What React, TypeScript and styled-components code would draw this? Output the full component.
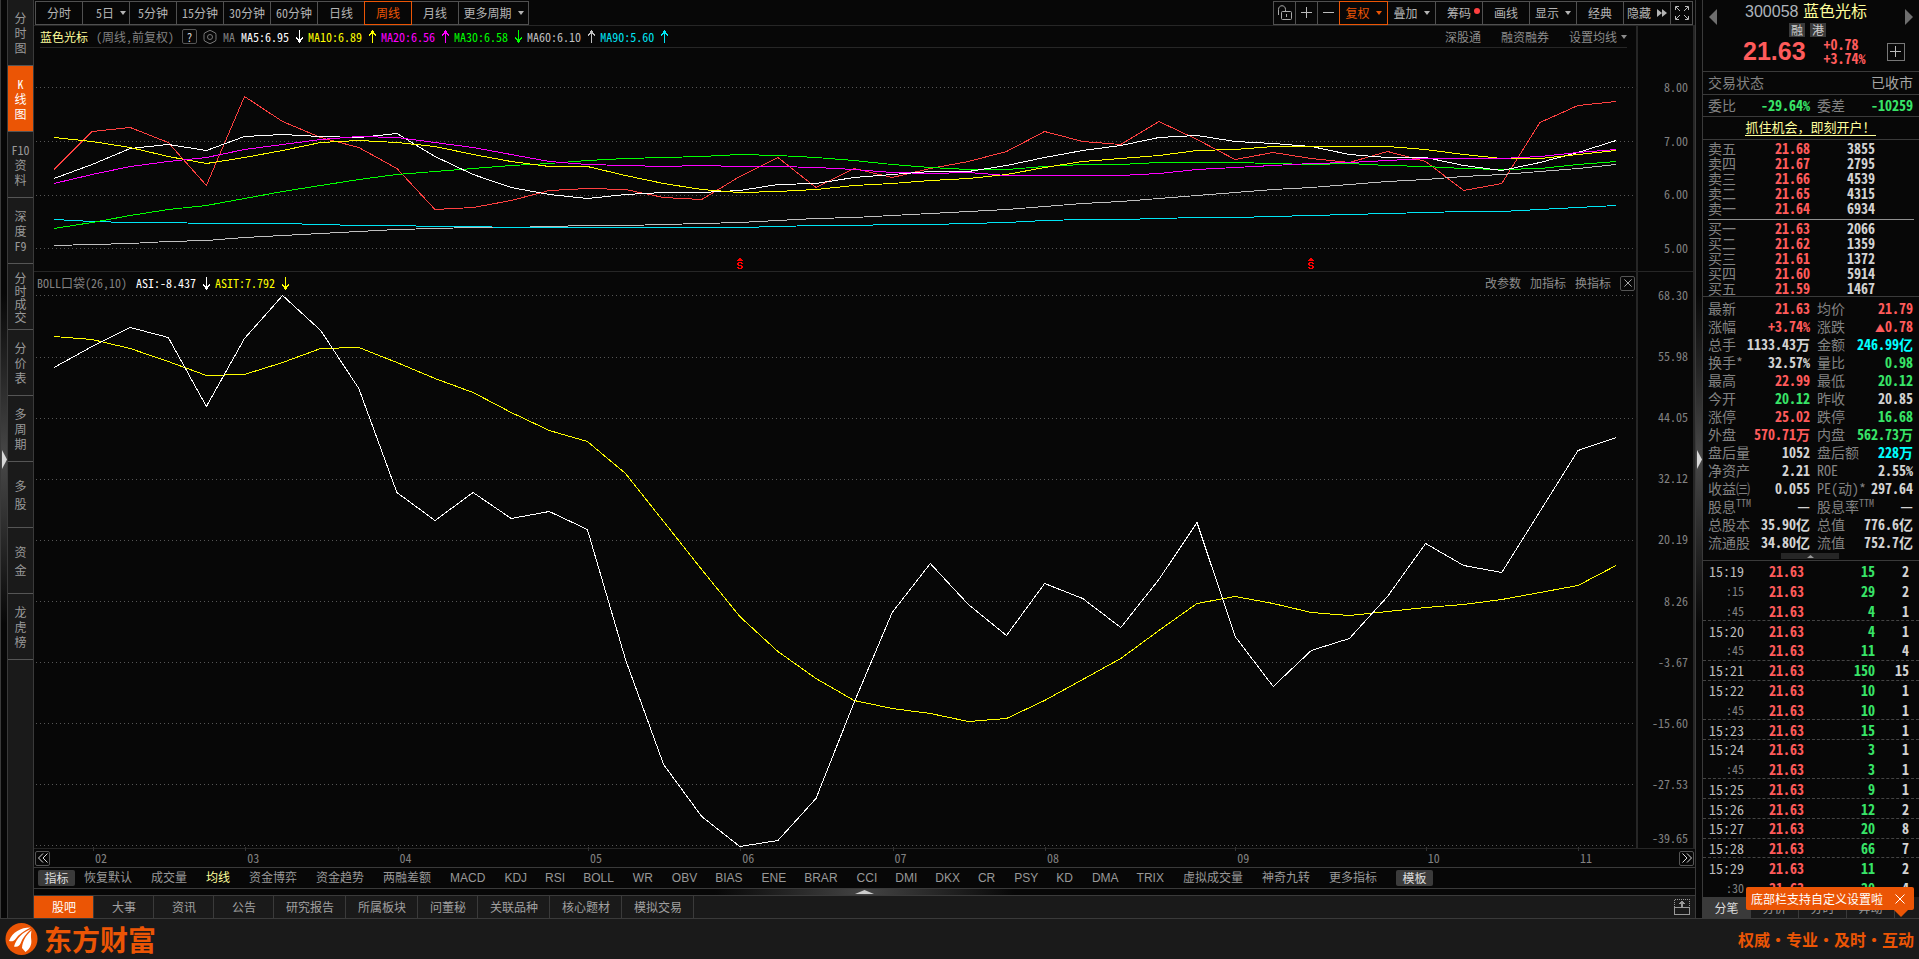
import React from "react";
import styled, { createGlobalStyle, css } from "styled-components";

const c = {
  bg: "#070707",
  panel: "#1a1a1a",
  line: "#3a3a3a",
  faint: "#262626",
  orange: "#eb5505",
  label: "#828282",
  text: "#a6a6a6",
  bright: "#d2d2d2",
  pale: "#ffff9c",
  red: "#ff5b5b",
  green: "#38e468",
  cyan: "#00ffff",
};

const mono = `"Noto Sans Mono CJK SC", "Noto Sans CJK SC", monospace`;
const sans = `"Liberation Sans", "Noto Sans CJK SC", sans-serif`;

const GlobalStyle = createGlobalStyle`
  * { box-sizing: border-box; }
  body { margin: 0; background: ${c.bg}; color: ${c.text}; font: 12px/14px ${mono}; }
  button { font: inherit; color: inherit; background: none; border: 0; padding: 0; margin: 0; white-space: nowrap; cursor: pointer; }
  a { color: inherit; text-decoration: none; }
  svg { display: block; }
`;

const Screen = styled.div`
  display: flex;
  flex-direction: column;
  height: 100vh;
  min-height: 800px;
  min-width: 1500px;
  overflow: hidden;
`;

const Workspace = styled.div`
  flex: 1;
  min-height: 0;
  display: flex;
`;

const Splitter = styled.div`
  flex: none;
  width: 8px;
  display: flex;
  align-items: center;
  justify-content: center;
  border: solid ${c.line};
  border-width: 0 1px;
  background: linear-gradient(${c.bg} 32%, #484848 50%, ${c.bg} 68%);
`;

const SideNav = styled.nav`
  flex: none;
  width: 26px;
  background: ${c.panel};
  border-right: 1px solid ${c.line};
`;

const SideTab = styled.button<{ $active?: boolean; $pitch: number }>`
  display: flex;
  flex-direction: column;
  align-items: center;
  justify-content: center;
  width: 100%;
  height: 66px;
  line-height: ${(p) => p.$pitch}px;
  color: ${(p) => (p.$active ? "#fff" : "#999")};
  background: ${(p) => (p.$active ? c.orange : "transparent")};
  border-bottom: 1px solid #555;
`;

const Center = styled.main`
  flex: 1;
  min-width: 0;
  display: flex;
  flex-direction: column;
`;

const Toolbar = styled.div`
  flex: none;
  height: 26px;
  padding: 1px 2px 0 1px;
  display: flex;
  justify-content: space-between;
  align-items: flex-start;
  border-bottom: 1px solid ${c.faint};
`;

const ButtonGroup = styled.div`
  display: flex;
  padding-left: 1px;
`;

const ToolButton = styled.button<{ $w: number; $active?: boolean; $indent?: boolean }>`
  position: relative;
  display: flex;
  align-items: center;
  justify-content: center;
  gap: 6px;
  width: ${(p) => p.$w}px;
  height: 24px;
  margin-left: -1px;
  padding-left: ${(p) => (p.$indent ? 10 : 0)}px;
  border: 1px solid ${(p) => (p.$active ? c.orange : "#505050")};
  color: ${(p) => (p.$active ? c.orange : "#b4b4b4")};
  z-index: ${(p) => (p.$active ? 1 : 0)};
`;

const RedDot = styled.i`
  position: absolute;
  top: 6px;
  right: 2px;
  width: 6px;
  height: 6px;
  border-radius: 50%;
  background: #ff4040;
`;

const Panel = styled.section<{ $fixed?: boolean }>`
  display: flex;
  min-height: 0;
  ${(p) =>
    p.$fixed
      ? css`
          flex: none;
          height: 246px;
          border-bottom: 1px solid ${c.faint};
        `
      : css`
          flex: 1;
        `}
`;

const PlotColumn = styled.div`
  flex: 1;
  min-width: 0;
  display: flex;
  flex-direction: column;
`;

const Axis = styled.div<{ $top: number; $bottom: number }>`
  flex: none;
  width: 59px;
  padding: ${(p) => p.$top}px 5px ${(p) => p.$bottom}px 0;
  display: flex;
  flex-direction: column;
  align-items: flex-end;
  justify-content: space-between;
  color: ${c.label};
  border: solid ${c.faint};
  border-width: 0 2px;
`;

const AxisSlot = styled.span<{ $last?: boolean }>`
  flex: ${(p) => (p.$last ? "none" : "1")};
  margin-top: ${(p) => (p.$last ? "-7px" : "0")};
`;

const ChartHeader = styled.header<{ $ruled?: boolean }>`
  flex: none;
  display: flex;
  align-items: center;
  justify-content: space-between;
  ${(p) =>
    p.$ruled
      ? css`
          height: 22px;
          margin: 0 9px 0 6px;
          border-bottom: 1px solid ${c.faint};
        `
      : css`
          height: 18px;
          padding: 4px 1px 0 3px;
        `}
`;

const Inline = styled.div<{ $gap?: number }>`
  display: flex;
  align-items: center;
  gap: ${(p) => p.$gap ?? 0}px;
  white-space: pre;
`;

const Reading = styled.span<{ $color: string }>`
  display: flex;
  align-items: center;
  color: ${(p) => p.$color};
  svg {
    width: 19px;
  }
`;

const Muted = styled.span`
  color: ${c.label};
`;

const StockName = styled.span`
  color: ${c.pale};
`;

const BoxButton = styled.button`
  display: flex;
  align-items: center;
  justify-content: center;
  width: 15px;
  height: 15px;
  border: 1px solid #555;
  border-radius: 2px;
  color: ${c.bright};
`;

const TextButton = styled.button`
  display: flex;
  align-items: center;
  gap: 4px;
  color: #8c8c8c;
`;

const Plot = styled.svg`
  flex: 1;
  min-height: 0;
  width: 100%;
  fill: none;
  shape-rendering: crispEdges;
  line {
    stroke: #565656;
    stroke-dasharray: 1 3;
  }
  polyline {
    vector-effect: non-scaling-stroke;
  }
`;

const DateRow = styled.div`
  flex: none;
  height: 19px;
  display: flex;
  border-top: 1px solid ${c.faint};
`;

const MonthTrack = styled.div`
  flex: 1;
  display: flex;
`;

const Month = styled.span<{ $span: number }>`
  flex: ${(p) => p.$span} 1 0;
  position: relative;
  padding-top: 2px;
  text-indent: 2px;
  color: ${c.label};
  &::before {
    content: "";
    position: absolute;
    left: 0;
    top: -2px;
    height: 4px;
    border-left: 1px solid #333;
  }
`;

const PageEdge = styled.div<{ $end?: boolean }>`
  display: flex;
  align-items: center;
  ${(p) =>
    p.$end
      ? css`
          width: 59px;
          justify-content: flex-end;
          padding-right: 1px;
        `
      : css`
          flex: 152 1 0;
          padding-left: 1px;
        `}
`;

const IndicatorRow = styled.div`
  flex: none;
  height: 22px;
  padding-left: 4px;
  display: flex;
  align-items: center;
  border: solid ${c.line};
  border-width: 1px 0;
`;

const IndicatorButton = styled.button<{ $on?: boolean; $tight?: boolean }>`
  margin-right: ${(p) => (p.$tight ? 18 : 19)}px;
  font-family: ${sans};
  color: ${(p) => (p.$on ? c.pale : "#999")};
`;

const Chip = styled.button<{ $lead?: boolean }>`
  width: 37px;
  height: 16px;
  margin-right: ${(p) => (p.$lead ? "9px" : "0")};
  border-radius: 2px;
  background: #3b3b3b;
  color: #ddd;
`;

const DragBar = styled.div`
  flex: none;
  height: 6px;
  display: flex;
  align-items: center;
  justify-content: center;
  background: linear-gradient(90deg, ${c.bg} 41%, #444 50%, ${c.bg} 59%);
`;

const BottomTabs = styled.div`
  flex: none;
  height: 23px;
  display: flex;
  justify-content: space-between;
  background: ${c.panel};
  border-top: 1px solid ${c.line};
`;

const BottomTab = styled.button<{ $active?: boolean }>`
  min-width: 60px;
  height: 22px;
  padding: 0 11px 0 12px;
  border-right: 1px solid ${c.line};
  color: ${(p) => (p.$active ? "#fff" : "#a0a0a0")};
  background: ${(p) => (p.$active ? c.orange : "transparent")};
`;

const PopOut = styled.button`
  padding-right: 5px;
`;

const Quote = styled.aside`
  position: relative;
  flex: none;
  width: 216px;
  display: flex;
  flex-direction: column;
  font-size: 14px;
  line-height: 18px;
`;

const QuoteHeader = styled.header`
  flex: none;
  height: 71px;
  display: flex;
`;

const HeaderSide = styled.div<{ $w: number }>`
  width: ${(p) => p.$w}px;
  padding: 9px 6px;
  display: flex;
  flex-direction: column;
  align-items: ${(p) => (p.$w > 24 ? "flex-end" : "flex-start")};
  gap: 18px;
`;

const HeaderBody = styled.div`
  flex: 1;
`;

const Title = styled.h1`
  margin: 0;
  height: 22px;
  font: 16px/24px ${sans};
  text-align: center;
  color: #aeb4bc;
  white-space: pre;
`;

const Badges = styled.div`
  display: flex;
  justify-content: center;
  gap: 5px;
  margin: 1px 0 0 3px;
`;

const Badge = styled.span`
  width: 16px;
  height: 14px;
  font-size: 12px;
  line-height: 14px;
  text-align: center;
  background: #3a3a3a;
  color: #ccc;
`;

const PriceLine = styled.div`
  display: flex;
  align-items: center;
  gap: 18px;
  height: 28px;
  margin-left: 18px;
  font-weight: 700;
  line-height: 14px;
  color: ${c.red};
`;

const BigPrice = styled.strong`
  font: 700 25px/28px ${sans};
`;

const PlusButton = styled.button`
  display: flex;
  align-items: center;
  justify-content: center;
  width: 18px;
  height: 18px;
  margin-right: 8px;
  border: 1px solid #777;
`;

const StatusRow = styled.div<{ $center?: boolean }>`
  flex: none;
  height: 23px;
  padding: 0 6px 2px 5px;
  display: flex;
  align-items: center;
  justify-content: ${(p) => (p.$center ? "center" : "space-between")};
  border-top: 1px solid ${c.line};
`;

const PromoLink = styled.a`
  font-size: 13px;
  line-height: 16px;
  color: ${c.pale};
  border-bottom: 1px solid ${c.pale};
`;

const Pair = styled.div`
  flex: none;
  display: grid;
  grid-template-columns: 102fr 96fr;
  column-gap: 7px;
  padding: 0 6px 0 5px;
  width: 100%;
`;

const Cell = styled.div`
  display: flex;
  height: 18px;
  justify-content: space-between;
  color: ${c.label};
  white-space: nowrap;
  sup {
    font-size: 10px;
    line-height: 10px;
    vertical-align: 5px;
  }
`;

const Value = styled.span<{ $tone: Tone }>`
  font-weight: 700;
  color: ${(p) => tones[p.$tone]};
`;

const RiseMark = styled.small`
  font-size: 10px;
  line-height: 10px;
`;

const PairRow = styled.div`
  flex: none;
  height: 22px;
  padding-bottom: 2px;
  display: flex;
  align-items: center;
  border-top: 1px solid ${c.line};
`;

const Book = styled.table`
  display: block;
  flex: none;
  border-top: 1px solid ${c.line};
  padding: 1px 5px 0;
  tbody {
    display: block;
  }
  tbody + tbody {
    border-top: 1px solid #909090;
    margin-top: 3px;
    padding-top: 1px;
  }
  tr {
    display: grid;
    grid-template-columns: 36px 66px 65px;
    line-height: 15px;
    height: 15px;
  }
  th,
  td {
    padding: 0;
    text-align: right;
    font-weight: 700;
    color: ${c.bright};
  }
  th {
    text-align: left;
    font-weight: 400;
    color: ${c.label};
  }
  td:nth-child(2) {
    color: ${c.red};
  }
`;

const Stats = styled.div`
  flex: none;
  border-top: 1px solid ${c.line};
  padding-top: 2px;
`;

const Collapse = styled.button`
  display: flex;
  align-items: center;
  justify-content: center;
  width: 58px;
  height: 6px;
  margin: 2px 0 1px 78px;
  background: #262626;
`;

const Trades = styled.table`
  flex: 1;
  min-height: 0;
  display: flex;
  border-top: 1px solid ${c.line};
  tbody {
    flex: 1;
    min-height: 0;
    display: flex;
    flex-direction: column;
  }
`;

const TradeRow = styled.tr<{ $minute: boolean; $rule: boolean }>`
  flex: 1 1 0;
  min-height: 0;
  display: grid;
  grid-template-columns: 36px 60px 71px 34px;
  align-items: center;
  padding-left: 5px;
  border-top: 1px dashed ${(p) => (p.$rule ? "#444" : "transparent")};
  td {
    padding: 0;
    text-align: right;
    font-weight: 700;
    line-height: 16px;
    color: ${c.bright};
  }
  td:nth-child(1) {
    font-size: ${(p) => (p.$minute ? 14 : 12)}px;
    font-weight: ${(p) => (p.$minute ? 500 : 400)};
    color: ${(p) => (p.$minute ? "#bdbdbd" : c.label)};
  }
  td:nth-child(2) {
    color: ${c.red};
  }
  td:nth-child(3) {
    color: ${c.green};
  }
`;

const QuoteTabs = styled.div`
  flex: none;
  height: 21px;
  display: flex;
  background: ${c.panel};
  font-size: 12px;
  line-height: 21px;
`;

const QuoteTab = styled.button<{ $active?: boolean }>`
  width: 48px;
  border-right: 1px solid ${c.line};
  color: ${(p) => (p.$active ? "#ddd" : "#999")};
  background: ${(p) => (p.$active ? "#3a3a3a" : "transparent")};
`;

const Tip = styled.div`
  position: absolute;
  right: 5px;
  bottom: 8px;
  width: 168px;
  height: 23px;
  padding: 0 9px 0 5px;
  display: flex;
  align-items: center;
  justify-content: space-between;
  font-size: 12px;
  color: #fff;
  background: ${c.orange};
  border-radius: 2px;
  &::after {
    content: "";
    position: absolute;
    right: 5px;
    top: 22px;
    border: solid transparent;
    border-width: 8px 8px 0;
    border-top-color: ${c.orange};
  }
`;

const Footer = styled.footer`
  flex: none;
  height: 41px;
  padding: 0 5px;
  display: flex;
  align-items: center;
  justify-content: space-between;
  background: ${c.panel};
  border-top: 1px solid ${c.line};
  color: ${c.orange};
  font-family: "Noto Sans CJK SC", sans-serif;
  font-weight: 700;
`;

const Brand = styled.a`
  display: flex;
  align-items: center;
  gap: 6px;
  font-size: 28px;
  line-height: 32px;
`;

const Slogan = styled.span`
  font-size: 16px;
  line-height: 20px;
`;

type Tone = "red" | "green" | "cyan" | "plain";
const tones: Record<Tone, string> = { red: c.red, green: c.green, cyan: c.cyan, plain: c.bright };

/* ---------- data ---------- */

const sideTabs = [
  ["分", "时", "图"],
  ["K", "线", "图"],
  ["F10", "资", "料"],
  ["深", "度", "F9"],
  ["分", "时", "成", "交"],
  ["分", "价", "表"],
  ["多", "周", "期"],
  ["多", "股"],
  ["资", "金"],
  ["龙", "虎", "榜"],
];
const pitches: Record<number, number> = { 2: 18, 3: 15, 4: 13 };

const periods = [
  { t: "分时" },
  { t: "5日", menu: true },
  { t: "5分钟" },
  { t: "15分钟" },
  { t: "30分钟" },
  { t: "60分钟" },
  { t: "日线" },
  { t: "周线", active: true },
  { t: "月线" },
];

const months: [string, number][] = [
  ["02", 400], ["03", 400], ["04", 500], ["05", 400], ["06", 400],
  ["07", 400], ["08", 500], ["09", 500], ["10", 400], ["11", 152],
];

const averages: [string, string, boolean][] = [
  ["MA5:6.95", "#ffffff", false],
  ["MA10:6.89", "#ffff00", true],
  ["MA20:6.56", "#ff00ff", true],
  ["MA30:6.58", "#00ff00", false],
  ["MA60:6.10", "#c0c0c0", true],
  ["MA90:5.60", "#00e5f5", true],
];

const priceLines: [string, number[]][] = [
  ["#ff4040", [169, 131, 127, 142, 185, 96, 121, 137, 147, 168, 209, 207, 200, 190, 188, 189, 197, 199, 176, 157, 187, 168, 177, 168, 161, 151, 131, 141, 144, 121, 139, 159, 152, 158, 162, 151, 161, 190, 183, 122, 105, 101]],
  ["#c0c0c0", [245, 244, 243, 241, 240, 237, 235, 233, 231, 229, 228, 227, 227, 226, 225, 225, 224, 223, 222, 220, 218, 217, 215, 213, 211, 209, 206, 203, 201, 198, 195, 192, 189, 187, 184, 181, 179, 176, 174, 171, 168, 164]],
  ["#00e5f5", [219, 221, 222, 222, 223, 223, 223, 224, 225, 225, 226, 226, 227, 227, 227, 227, 227, 227, 227, 226, 225, 225, 224, 224, 223, 222, 220, 219, 219, 218, 217, 217, 216, 215, 214, 213, 212, 211, 211, 209, 207, 205]],
  ["#00ff00", [228, 222, 215, 209, 205, 198, 191, 185, 179, 174, 171, 168, 165, 163, 160, 158, 157, 156, 154, 155, 157, 160, 164, 167, 169, 169, 166, 164, 164, 162, 162, 162, 163, 164, 163, 165, 166, 168, 169, 168, 164, 161]],
  ["#ffffff", [178, 164, 148, 144, 150, 136, 134, 136, 137, 133, 156, 174, 187, 194, 198, 194, 192, 192, 190, 184, 183, 177, 174, 171, 171, 165, 157, 150, 145, 137, 135, 141, 143, 146, 154, 157, 157, 165, 170, 162, 152, 140]],
  ["#ffff00", [137, 141, 147, 156, 163, 157, 150, 142, 140, 142, 146, 154, 161, 166, 166, 175, 183, 189, 192, 191, 189, 185, 183, 180, 178, 174, 167, 161, 158, 155, 150, 149, 146, 146, 146, 146, 149, 154, 158, 158, 154, 150]],
  ["#ff00ff", [183, 174, 166, 161, 157, 149, 144, 139, 136, 137, 142, 147, 154, 161, 164, 165, 166, 165, 166, 166, 167, 169, 172, 173, 172, 175, 175, 175, 175, 173, 169, 167, 165, 163, 162, 160, 158, 158, 158, 156, 152, 149]],
];

const asiLines: [string, number[]][] = [
  ["#ffff00", [336, 339, 348, 361, 375, 374, 362, 348, 347, 362, 378, 392, 412, 430, 441, 473, 521, 569, 616, 651, 678, 700, 708, 713, 721, 718, 700, 679, 658, 630, 603, 596, 603, 612, 615, 611, 607, 604, 599, 592, 585, 565]],
  ["#ffffff", [367, 346, 327, 337, 406, 338, 295, 330, 388, 492, 520, 492, 518, 511, 529, 659, 764, 816, 846, 840, 798, 702, 612, 563, 604, 635, 583, 598, 627, 579, 522, 636, 686, 650, 638, 596, 543, 565, 572, 511, 450, 437]],
];

const indicators = ["恢复默认", "成交量", "均线", "资金博弈", "资金趋势", "两融差额", "MACD", "KDJ", "RSI", "BOLL", "WR", "OBV", "BIAS", "ENE", "BRAR", "CCI", "DMI", "DKX", "CR", "PSY", "KD", "DMA", "TRIX", "虚拟成交量", "神奇九转", "更多指标"];
const isShortCode = (t: string) => /^[A-Z]{3}$/.test(t);
const bottomTabs = ["股吧", "大事", "资讯", "公告", "研究报告", "所属板块", "问董秘", "关联品种", "核心题材", "模拟交易"];

const asks = [["卖五", "21.68", "3855"], ["卖四", "21.67", "2795"], ["卖三", "21.66", "4539"], ["卖二", "21.65", "4315"], ["卖一", "21.64", "6934"]];
const bids = [["买一", "21.63", "2066"], ["买二", "21.62", "1359"], ["买三", "21.61", "1372"], ["买四", "21.60", "5914"], ["买五", "21.59", "1467"]];

type Stat = [React.ReactNode, React.ReactNode, Tone];
const stats: [Stat, Stat][] = [
  [["最新", "21.63", "red"], ["均价", "21.79", "red"]],
  [["涨幅", "+3.74%", "red"], ["涨跌", <><RiseMark>▲</RiseMark>0.78</>, "red"]],
  [["总手", "1133.43万", "plain"], ["金额", "246.99亿", "cyan"]],
  [["换手*", "32.57%", "plain"], ["量比", "0.98", "green"]],
  [["最高", "22.99", "red"], ["最低", "20.12", "green"]],
  [["今开", "20.12", "green"], ["昨收", "20.85", "plain"]],
  [["涨停", "25.02", "red"], ["跌停", "16.68", "green"]],
  [["外盘", "570.71万", "red"], ["内盘", "562.73万", "green"]],
  [["盘后量", "1052", "plain"], ["盘后额", "228万", "cyan"]],
  [["净资产", "2.21", "plain"], ["ROE", "2.55%", "plain"]],
  [["收益㈢", "0.055", "plain"], ["PE(动)*", "297.64", "plain"]],
  [[<>股息<sup>TTM</sup></>, "—", "plain"], [<>股息率<sup>TTM</sup></>, "—", "plain"]],
  [["总股本", "35.90亿", "plain"], ["总值", "776.6亿", "plain"]],
  [["流通股", "34.80亿", "plain"], ["流值", "752.7亿", "plain"]],
];

const trades = [
  ["15:19", "15", "2"], [":15", "29", "2"], [":45", "4", "1"], ["15:20", "4", "1"], [":45", "11", "4"],
  ["15:21", "150", "15"], ["15:22", "10", "1"], [":45", "10", "1"], ["15:23", "15", "1"], ["15:24", "3", "1"],
  [":45", "3", "1"], ["15:25", "9", "1"], ["15:26", "12", "2"], ["15:27", "20", "8"], ["15:28", "66", "7"],
  ["15:29", "11", "2"], [":30", "20", "4"],
];

/* ---------- drawings ---------- */

const Caret = () => (
  <svg width="6" height="4" viewBox="0 0 6 4" fill="currentColor"><path d="M0 0h6L3 4z" /></svg>
);

const Trend = ({ up }: { up: boolean }) => (
  <svg width="19" height="13" viewBox="0 0 19 13" fill="none" stroke="currentColor" shapeRendering="crispEdges">
    <path d={up ? "M10.500 0v13M7.500 4v2M8.500 3v2M9.500 1v3M11.500 1v3M12.500 3v2M13.500 4v2" : "M10.500 0v13M7.500 7v2M8.500 8v2M9.500 9v3M11.500 9v3M12.500 8v2M13.500 7v2"} />
  </svg>
);

const Wedge = () => (
  <svg width="5" height="19" viewBox="0 0 5 19" fill="#d8d8d8"><path d="M0 0l5 9.500-5 9.500z" /></svg>
);

const Side = ({ right }: { right?: boolean }) => (
  <svg width="8" height="16" viewBox="0 0 8 16" fill="#6e6e6e"><path d={right ? "M0 0l8 8-8 8z" : "M8 0L0 8l8 8z"} /></svg>
);

const Chevrons = ({ right }: { right?: boolean }) => (
  <svg width="10" height="10" viewBox="0 0 10 10" fill="none" stroke="#ddd">
    <path d={right ? "M.5.5L5 5 .5 9.500M5 .5L9.500 5 5 9.500" : "M5 .5L.5 5 5 9.500M9.500.5L5 5l4.500 4.500"} />
  </svg>
);

const Lock = () => (
  <svg width="14" height="16" viewBox="0 0 14 16" fill="none" stroke="#aaa">
    <rect x="3.500" y="6.500" width="10" height="8" rx="1" />
    <path d="M.5 10V4.500c0-5 7-5 7 0v2M8.500 9v3" />
  </svg>
);

const Gear = () => (
  <svg width="14" height="14" viewBox="0 0 14 14" fill="none" stroke="#777">
    <path d="M5 1.200Q7-.4 9 1.200l2 1.100q2 .2 2 2.400v4.600q0 2.200-2 2.400l-2 1.100q-2 1.600-4 0l-2-1.100Q1 11.500 1 9.300V4.700Q1 2.500 3 2.300z" />
    <circle cx="7" cy="7" r="2.500" />
  </svg>
);

const Expand = () => (
  <svg width="14" height="14" viewBox="0 0 14 14" fill="none" stroke="#bbb">
    <path d="M.5 4V.5H4M10 .5h3.500V4M13.500 10v3.500H10M4 13.500H.5V10M1 1l4 4M13 1L9 5M13 13L9 9M1 13l4-4" />
  </svg>
);

const Forward = () => (
  <svg width="10" height="8" viewBox="0 0 10 8" fill="currentColor"><path d="M0 0l5 4-5 4zM5 0l5 4-5 4z" /></svg>
);

const Cross = ({ size }: { size: number }) => (
  <svg width={size} height={size} viewBox="0 0 10 10" fill="none" stroke="currentColor"><path d="M.5.5l9 9M9.500.5l-9 9" /></svg>
);

const Plus = ({ minus }: { minus?: boolean }) => (
  <svg width="12" height="12" viewBox="0 0 12 12" stroke="#bbb" shapeRendering="crispEdges">
    <path d={minus ? "M0 5.500h11" : "M0 5.500h11M5.500 0v11"} />
  </svg>
);

const BrandMark = () => (
  <svg width="33" height="32" viewBox="0 0 32 32">
    <circle cx="16" cy="16" r="16" fill={c.orange} />
    <path fill="#fff" d="M25 4.500C15 4.500 7 9 3.500 18c3 .8 5 0 6.500-2C13 11.500 18 8 25 4.500zM25.500 6C17 9.500 11 15 8.500 23.500c3.500.8 5.500-.5 6.500-3C17 15 20.500 10.500 25.500 6zM26 7.500C20 12.500 17 18.500 16.500 25l3.500 4c4.500-3 6.500-7.500 5.700-12.500-.4-3.500-.2-6 .3-9z" />
  </svg>
);

const points = (levels: number[]) => levels.map((y, i) => `${20 + i * 38.1},${y + 0.5}`).join(" ");

function Lines({ top, height, grid, series, marks = [] }: { top: number; height: number; grid: number[]; series: [string, number[]][]; marks?: number[] }) {
  return (
    <Plot viewBox={`0 ${top} 1602 ${height}`} preserveAspectRatio="none">
      {grid.map((y) => <line key={y} x1="2" x2="1600" y1={y + 0.5} y2={y + 0.5} />)}
      {series.map(([color, levels]) => <polyline key={color} stroke={color} points={points(levels)} />)}
      {marks.map((week) => (
        <g key={week} transform={`translate(${Math.round(17 + week * 38.1)} 258)`} stroke="#ff0000">
          <path d="M2 .5h2M1 1.500h4M0 2.500h6M1 4.500h4M0 5.500h2M4 5.500h2M0 6.500h2M1 7.500h4M4 8.500h2M0 9.500h2M4 9.500h2M1 10.500h4" />
        </g>
      ))}
    </Plot>
  );
}

const StatCell = ({ stat: [label, value, tone] }: { stat: Stat }) => (
  <Cell><span>{label}</span><Value $tone={tone}>{value}</Value></Cell>
);

export default function App() {
  return (
    <Screen>
      <GlobalStyle />
      <Workspace>
        <Splitter><Wedge /></Splitter>
        <SideNav>
          {sideTabs.map((parts, i) => (
            <SideTab key={i} $active={i === 1} $pitch={pitches[parts.length]}>
              {parts.map((p) => <span key={p}>{p}</span>)}
            </SideTab>
          ))}
        </SideNav>

        <Center>
          <Toolbar>
            <ButtonGroup>
              {periods.map((p) => (
                <ToolButton key={p.t} $w={48} $active={p.active} $indent={p.menu}>{p.t}{p.menu && <Caret />}</ToolButton>
              ))}
              <ToolButton $w={71}>更多周期<Caret /></ToolButton>
            </ButtonGroup>
            <ButtonGroup>
              <ToolButton $w={23} aria-label="锁定"><Lock /></ToolButton>
              <ToolButton $w={23} aria-label="放大"><Plus /></ToolButton>
              <ToolButton $w={23} aria-label="缩小"><Plus minus /></ToolButton>
              <ToolButton $w={49} $active>复权<Caret /></ToolButton>
              <ToolButton $w={49}>叠加<Caret /></ToolButton>
              <ToolButton $w={48}>筹码<RedDot /></ToolButton>
              <ToolButton $w={48}>画线</ToolButton>
              <ToolButton $w={48}>显示<Caret /></ToolButton>
              <ToolButton $w={48}>经典</ToolButton>
              <ToolButton $w={48}>隐藏<Forward /></ToolButton>
              <ToolButton $w={23} aria-label="全屏"><Expand /></ToolButton>
            </ButtonGroup>
          </Toolbar>

          <Panel $fixed>
            <PlotColumn>
              <ChartHeader $ruled>
                <Inline $gap={8}>
                  <StockName>蓝色光标</StockName>
                  <Muted>(周线,前复权)</Muted>
                  <Inline $gap={6}>
                    <BoxButton>?</BoxButton>
                    <Gear />
                    <Muted>MA</Muted>
                    <Inline>
                      {averages.map(([t, color, up]) => (
                        <Reading key={t} $color={color}>{t}<Trend up={up} /></Reading>
                      ))}
                    </Inline>
                  </Inline>
                </Inline>
                <Inline $gap={20}>
                  <TextButton>深股通</TextButton>
                  <TextButton>融资融券</TextButton>
                  <TextButton>设置均线<Caret /></TextButton>
                </Inline>
              </ChartHeader>
              <Lines top={48} height={223} grid={[87, 141, 195, 248]} series={priceLines} marks={[18, 33]} />
            </PlotColumn>
            <Axis $top={54} $bottom={16}>
              {["8.00", "7.00", "6.00", "5.00"].map((v) => <span key={v}>{v}</span>)}
            </Axis>
          </Panel>

          <Panel>
            <PlotColumn>
              <ChartHeader>
                <Inline $gap={9}>
                  <Muted>BOLL口袋(26,10)</Muted>
                  <Inline>
                    <Reading $color="#fff">ASI:-8.437<Trend up={false} /></Reading>
                    <Reading $color="#ffff00">ASIT:7.792<Trend up={false} /></Reading>
                  </Inline>
                </Inline>
                <Inline $gap={9}>
                  <TextButton>改参数</TextButton>
                  <TextButton>加指标</TextButton>
                  <TextButton>换指标</TextButton>
                  <BoxButton aria-label="关闭"><Cross size={8} /></BoxButton>
                </Inline>
              </ChartHeader>
              <Lines top={290} height={558} grid={[295, 357, 418, 479, 540, 601, 662, 723, 784, 845]} series={asiLines} />
            </PlotColumn>
            <Axis $top={16} $bottom={3}>
              {["68.30", "55.98", "44.05", "32.12", "20.19", "8.26", "-3.67", "-15.60", "-27.53", "-39.65"].map((v, i) => (
                <AxisSlot key={v} $last={i === 9}>{v}</AxisSlot>
              ))}
            </Axis>
          </Panel>

          <DateRow>
            <MonthTrack>
              <PageEdge><BoxButton aria-label="向前"><Chevrons /></BoxButton></PageEdge>
              {months.map(([m, span]) => <Month key={m} $span={span}>{m}</Month>)}
            </MonthTrack>
            <PageEdge $end><BoxButton aria-label="向后"><Chevrons right /></BoxButton></PageEdge>
          </DateRow>

          <IndicatorRow>
            <Chip $lead>指标</Chip>
            {indicators.map((t) => (
              <IndicatorButton key={t} $on={t === "均线"} $tight={isShortCode(t)}>{t}</IndicatorButton>
            ))}
            <Chip>模板</Chip>
          </IndicatorRow>
          <DragBar>
            <svg width="19" height="4" viewBox="0 0 19 4" fill="#ccc"><path d="M0 4l9.500-4L19 4z" /></svg>
          </DragBar>
          <BottomTabs>
            <Inline>
              {bottomTabs.map((t, i) => <BottomTab key={t} $active={i === 0}>{t}</BottomTab>)}
            </Inline>
            <PopOut aria-label="弹出">
              <svg width="16" height="16" viewBox="0 0 16 16" fill="none" stroke="#999" shapeRendering="crispEdges">
                <path d="M.5 8.500h15v7H.5zM7 3v5M8.500 3v5M5 4.500h6M6 3.500h4M7 2.500h2" />
                <path d="M.5 8V.5h15V8" strokeDasharray="1 1" />
              </svg>
            </PopOut>
          </BottomTabs>
        </Center>

        <Splitter><Wedge /></Splitter>

        <Quote>
          <QuoteHeader>
            <HeaderSide $w={22}><button aria-label="上一只"><Side /></button></HeaderSide>
            <HeaderBody>
              <Title>300058 <StockName>蓝色光标</StockName></Title>
              <Badges><Badge>融</Badge><Badge>港</Badge></Badges>
              <PriceLine>
                <BigPrice>21.63</BigPrice>
                <span>+0.78<br />+3.74%</span>
              </PriceLine>
            </HeaderBody>
            <HeaderSide $w={32}>
              <button aria-label="下一只"><Side right /></button>
              <PlusButton aria-label="加自选"><Plus /></PlusButton>
            </HeaderSide>
          </QuoteHeader>
          <StatusRow><Muted>交易状态</Muted><span>已收市</span></StatusRow>
          <PairRow>
            <Pair>
              <StatCell stat={["委比", "-29.64%", "green"]} />
              <StatCell stat={["委差", "-10259", "green"]} />
            </Pair>
          </PairRow>
          <StatusRow $center><PromoLink href="#open">抓住机会，即刻开户！</PromoLink></StatusRow>
          <Book>
            {[asks, bids].map((side, i) => (
              <tbody key={i}>
                {side.map(([level, price, lots]) => (
                  <tr key={level}><th scope="row">{level}</th><td>{price}</td><td>{lots}</td></tr>
                ))}
              </tbody>
            ))}
          </Book>
          <Stats>
            {stats.map(([a, b], i) => (
              <Pair key={i}><StatCell stat={a} /><StatCell stat={b} /></Pair>
            ))}
            <Collapse aria-label="收起"><svg width="7" height="3" viewBox="0 0 7 3" fill="#999"><path d="M0 3l3.500-3L7 3z" /></svg></Collapse>
          </Stats>
          <Trades>
            <tbody>
              {trades.map(([time, lots, count], i) => {
                const minute = time.length > 3;
                return (
                  <TradeRow key={i} $minute={minute} $rule={minute && i > 0}>
                    <td>{time}</td><td>21.63</td><td>{lots}</td><td>{count}</td>
                  </TradeRow>
                );
              })}
            </tbody>
          </Trades>
          <QuoteTabs>
            {["分笔", "分价", "分时", "异动"].map((t, i) => <QuoteTab key={t} $active={i === 0}>{t}</QuoteTab>)}
          </QuoteTabs>
          <Tip role="status">
            底部栏支持自定义设置啦
            <button aria-label="关闭提示"><Cross size={10} /></button>
          </Tip>
        </Quote>
      </Workspace>
      <Footer>
        <Brand href="#home"><BrandMark />东方财富</Brand>
        <Slogan>权威·专业·及时·互动</Slogan>
      </Footer>
    </Screen>
  );
}
